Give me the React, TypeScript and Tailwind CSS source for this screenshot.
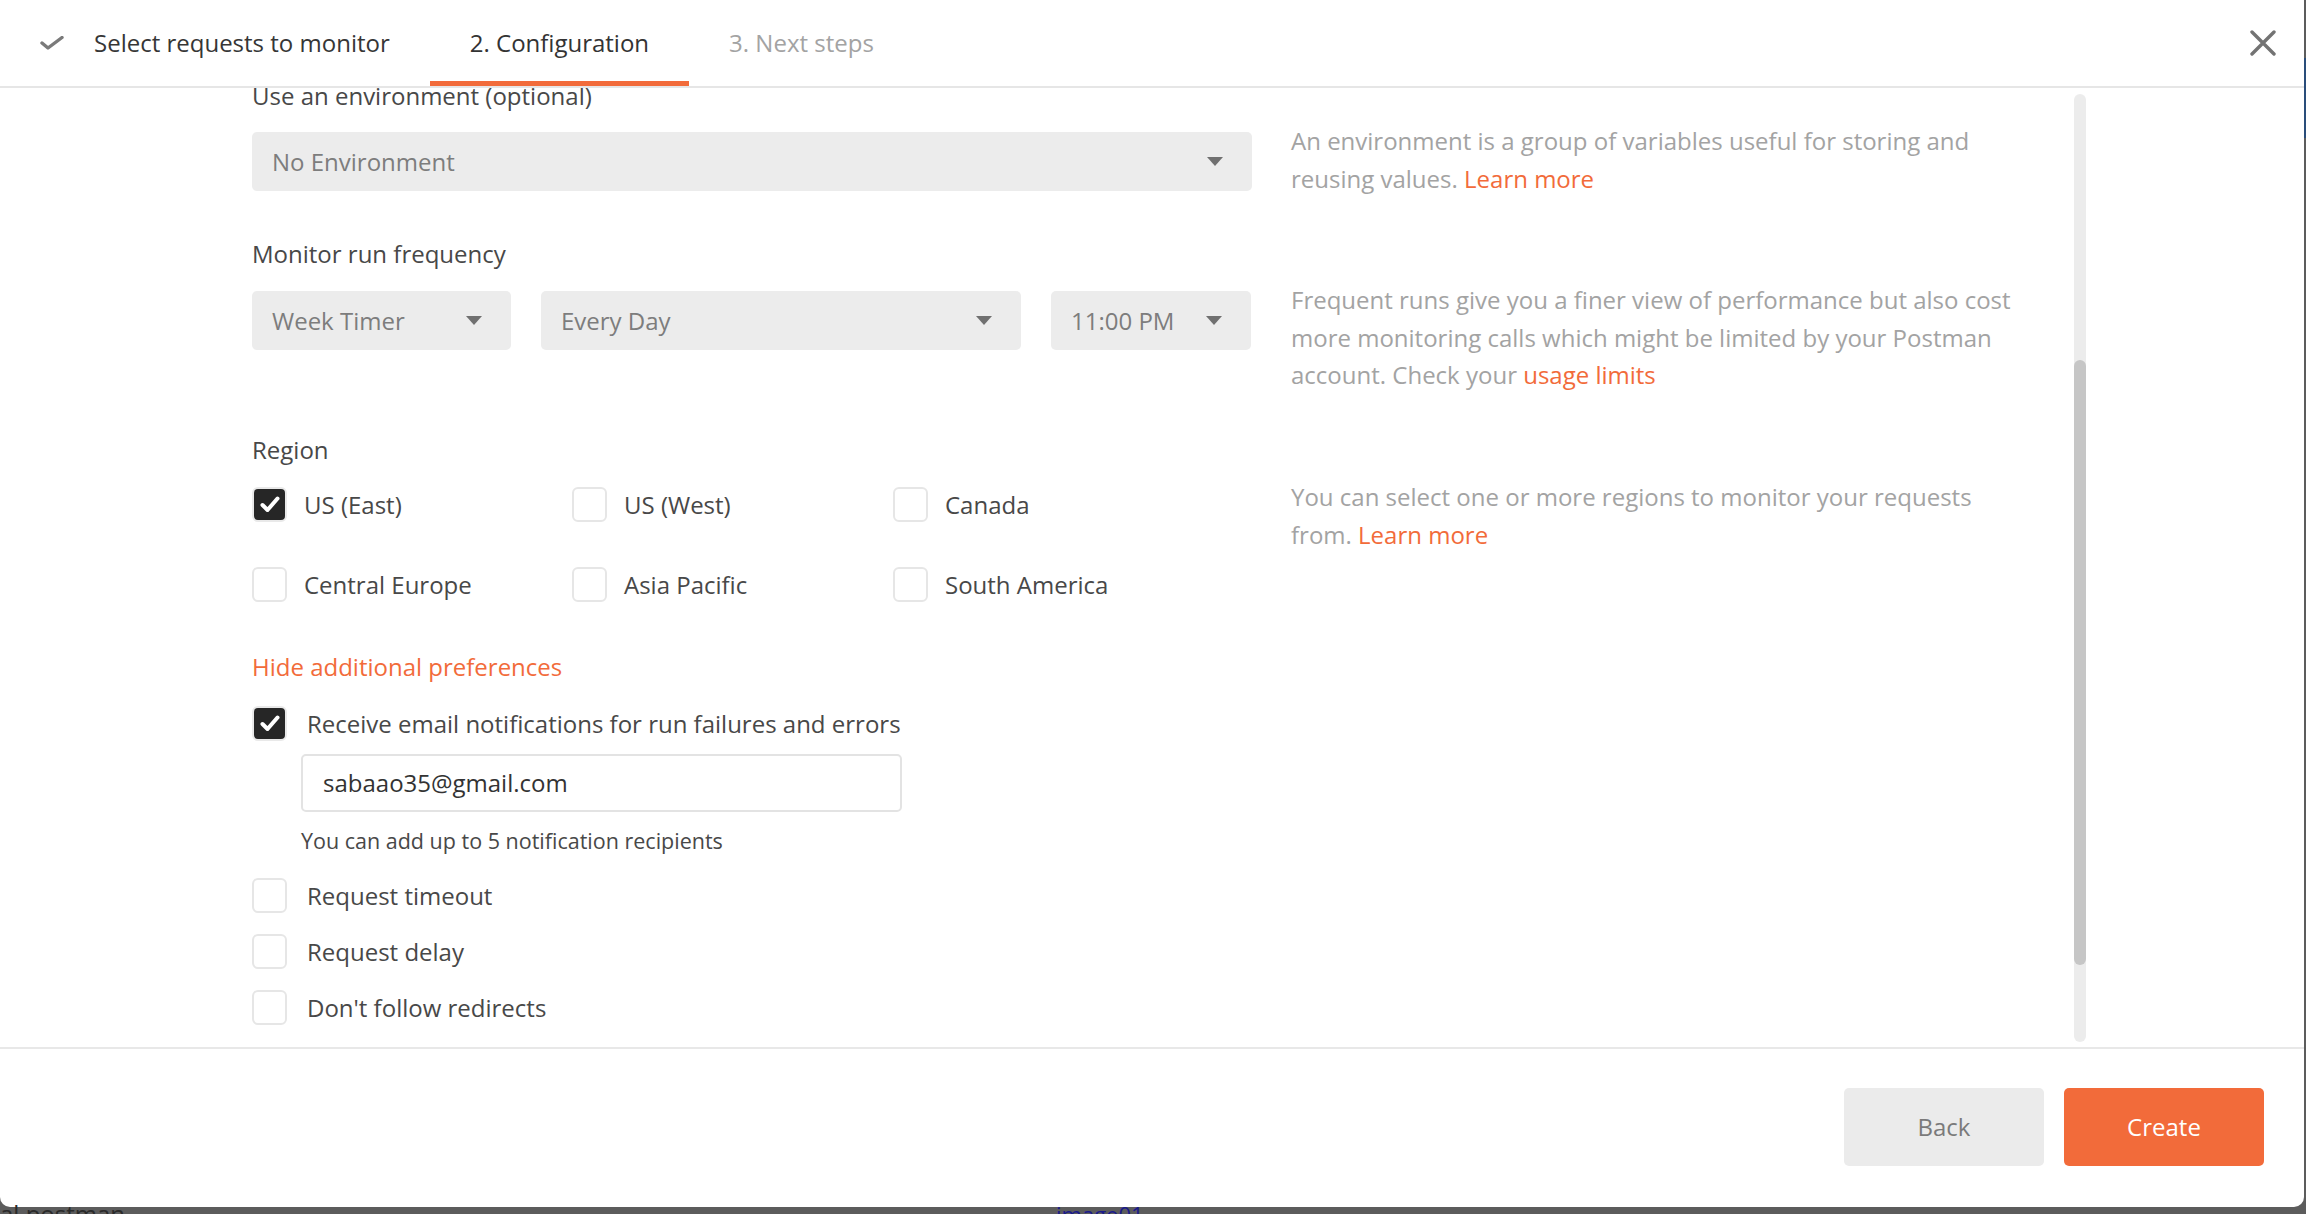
import React from "react";

const font = { fontFamily: '"Open Sans", "Noto Sans", sans-serif' };

function Caret() {
  return (
    <svg width="16" height="9" viewBox="0 0 16 9">
      <path d="M0 0 L16 0 L8 9 Z" fill="#707070" />
    </svg>
  );
}

function Select({ label, className }: { label: string; className: string }) {
  return (
    <div
      className={`h-[59px] rounded-[5px] bg-[#ececec] flex items-center justify-between pl-[20px] pr-[29px] text-[24px] text-[#7d7d7d] ${className}`}
    >
      <span>{label}</span>
      <Caret />
    </div>
  );
}

function Box({ checked }: { checked?: boolean }) {
  if (checked) {
    return (
      <div className="w-[35px] h-[35px] shrink-0 rounded-[6px] bg-[#262626] border-2 border-[#e9e9e9] flex items-center justify-center">
        <svg width="20" height="17" viewBox="0 0 20 17">
          <path d="M2.5 9 L7.5 14 L17.5 2.5" fill="none" stroke="#fff" strokeWidth="4" strokeLinecap="round" strokeLinejoin="round" />
        </svg>
      </div>
    );
  }
  return <div className="w-[35px] h-[35px] shrink-0 rounded-[6px] border-2 border-[#e6e6e6] bg-white" />;
}

function Check({ label, checked, gap = "ml-[17px]" }: { label: string; checked?: boolean; gap?: string }) {
  return (
    <div className="flex items-center h-[35px]">
      <Box checked={checked} />
      <span className={`${gap} text-[24px] text-[#484848] leading-[30px] whitespace-nowrap`}>{label}</span>
    </div>
  );
}

function Help({ children, className }: { children: React.ReactNode; className: string }) {
  return (
    <div className={`w-[736px] ml-[39px] text-[24px] leading-[37.5px] text-[#a3a3a3] ${className}`}>{children}</div>
  );
}

const orange = "text-[#f26b3a]";

export default function App() {
  return (
    <div className="w-[2306px] h-[1214px] bg-[#5c5c5c] relative overflow-hidden" style={font}>
      <div className="absolute right-0 top-[58px] w-[2px] h-[80px] bg-[#2a4d7a]" />
      <div className="w-[2304px] h-[1207px] bg-white rounded-b-[10px] flex flex-col overflow-hidden">
        {/* header */}
        <div className="h-[88px] shrink-0 border-b-2 border-[#e6e6e6] flex items-stretch pl-[11px] pr-[28px]">
          <div className="flex items-center pl-[29px] pr-[40px] text-[24px] text-[#363636]">
            <svg width="24" height="14" viewBox="0 0 24 14" className="mr-[30px]">
              <path d="M2 7 L8 12 L22 1.5" fill="none" stroke="#7a7a7a" strokeWidth="3.4" strokeLinecap="round" strokeLinejoin="round" />
            </svg>
            <span>Select requests to monitor</span>
          </div>
          <div className="relative flex items-center px-[40px] text-[24px] text-[#333]">
            2. Configuration
            <div className="absolute left-0 right-0 bottom-0 h-[5px] bg-[#f26b3a]" />
          </div>
          <div className="flex items-center px-[40px] text-[24px] text-[#a3a3a3]">3. Next steps</div>
          <div className="flex-1" />
          <div className="flex items-center">
            <svg width="26" height="26" viewBox="0 0 26 26">
              <path d="M2 2 L24 24 M24 2 L2 24" stroke="#737373" strokeWidth="3.4" strokeLinecap="round" />
            </svg>
          </div>
        </div>

        {/* body */}
        <div className="flex-1 flex overflow-hidden">
          <div className="flex-1 pl-[252px]">
            {/* environment */}
            <div className="flex h-[158px] -mt-[7px]">
              <div className="w-[1000px]">
                <div className="text-[24px] leading-[30px] text-[#484848]">Use an environment (optional)</div>
                <Select label="No Environment" className="mt-[21px] w-[1000px]" />
              </div>
              <Help className="mt-[41px]">
                An environment is a group of variables useful for storing and reusing values.{" "}
                <span className={orange}>Learn more</span>
              </Help>
            </div>

            {/* frequency */}
            <div className="flex h-[196px]">
              <div className="w-[1000px]">
                <div className="text-[24px] leading-[30px] text-[#484848]">Monitor run frequency</div>
                <div className="flex gap-[30px] mt-[22px]">
                  <Select label="Week Timer" className="w-[259px] pr-[28px]" />
                  <Select label="Every Day" className="w-[480px] pr-[28px]" />
                  <Select label="11:00 PM" className="w-[200px]" />
                </div>
              </div>
              <Help className="mt-[42px]">
                Frequent runs give you a finer view of performance but also cost more monitoring calls which might be
                limited by your Postman account. Check your <span className={orange}>usage limits</span>
              </Help>
            </div>

            {/* region */}
            <div className="flex">
              <div className="w-[1000px]">
                <div className="text-[24px] leading-[30px] text-[#484848]">Region</div>
                <div className="grid grid-cols-[320px_321px_auto] gap-y-[45px] mt-[22px]">
                  <Check label="US (East)" checked />
                  <Check label="US (West)" />
                  <Check label="Canada" />
                  <Check label="Central Europe" />
                  <Check label="Asia Pacific" />
                  <Check label="South America" />
                </div>
              </div>
              <Help className="mt-[43px]">
                You can select one or more regions to monitor your requests from.{" "}
                <span className={orange}>Learn more</span>
              </Help>
            </div>

            {/* preferences */}
            <div className={`mt-[50px] text-[24px] leading-[30px] ${orange}`}>Hide additional preferences</div>
            <div className="mt-[24px]">
              <Check label="Receive email notifications for run failures and errors" checked gap="ml-[20px]" />
            </div>
            <div className="ml-[49px] mt-[13px] w-[601px] h-[58px] rounded-[5px] border-2 border-[#e3e3e3] flex items-center pl-[20px] text-[24px] text-[#333]">
              sabaao35@gmail.com
            </div>
            <div className="ml-[49px] mt-[15px] text-[21.5px] leading-[28px] text-[#484848]">
              You can add up to 5 notification recipients
            </div>
            <div className="mt-[23px] flex flex-col gap-[21px]">
              <Check label="Request timeout" gap="ml-[20px]" />
              <Check label="Request delay" gap="ml-[20px]" />
              <Check label="Don't follow redirects" gap="ml-[20px]" />
            </div>
          </div>

          {/* scrollbar */}
          <div className="w-[12px] mt-[6px] mb-[5px] mr-[218px] rounded-full bg-[#ececec] flex flex-col">
            <div className="h-[266px]" />
            <div className="h-[605px] rounded-full bg-[#c6c6c6]" />
          </div>
        </div>

        {/* footer */}
        <div className="h-[160px] shrink-0 border-t-2 border-[#e8e8e8] flex items-center justify-end gap-[20px] pr-[40px] pb-[2px]">
          <div className="w-[200px] h-[78px] rounded-[5px] bg-[#ebebeb] flex items-center justify-center text-[24px] text-[#7a7a7a]">
            Back
          </div>
          <div className="w-[200px] h-[78px] rounded-[5px] bg-[#f26b3a] flex items-center justify-center text-[24px] text-white">
            Create
          </div>
        </div>
      </div>
      <div className="absolute left-0 top-[1199px] text-[24px] text-[#2a2a2a] leading-[30px]">al postman</div>
      <div className="absolute left-[1056px] top-[1199px] text-[22px] text-[#1a1a8a] leading-[30px]">image01</div>
    </div>
  );
}
